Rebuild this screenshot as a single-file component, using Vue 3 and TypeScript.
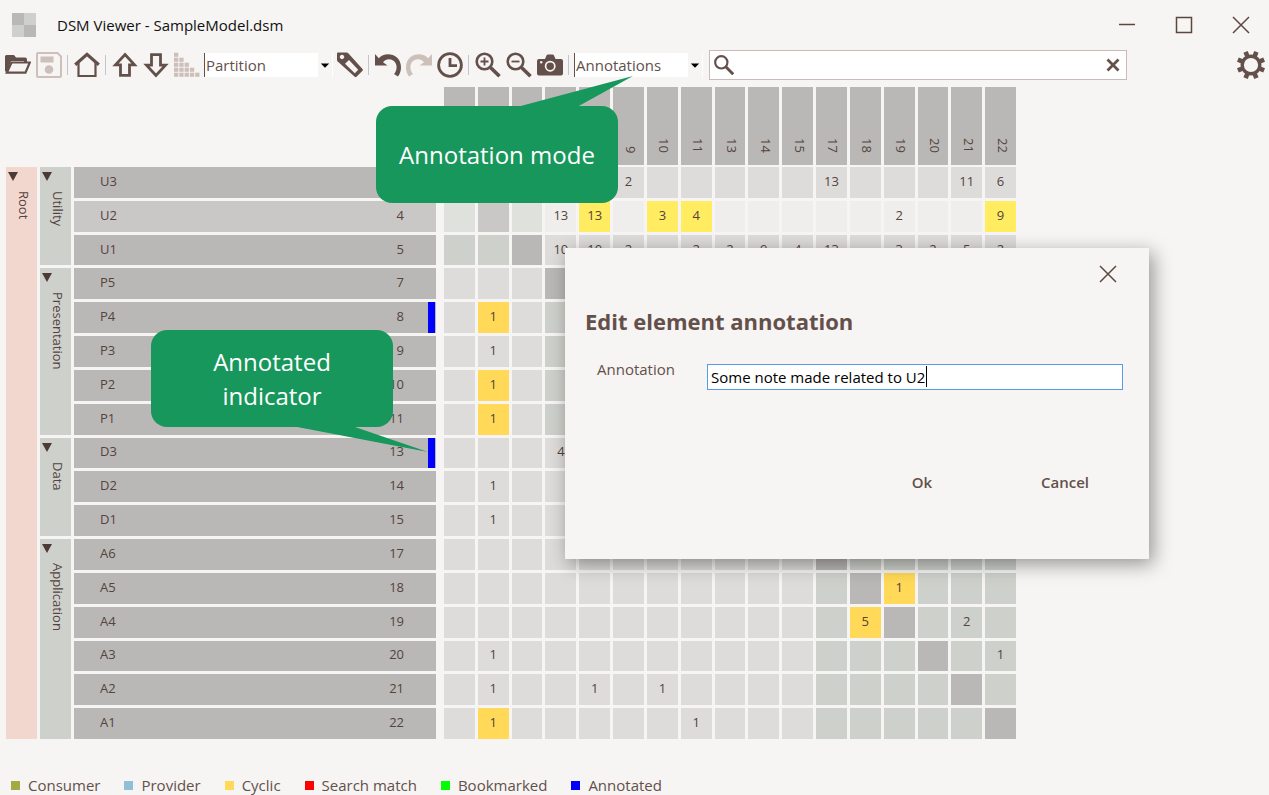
<script setup lang="ts">
import { ref } from 'vue'

interface Leaf { name: string; id: number; group: number; annotated?: boolean }
interface Group { name: string; start: number; span: number }
interface Cell { value: string; kind: string }

const groups: Group[] = [
  { name: 'Utility', start: 1, span: 3 },
  { name: 'Presentation', start: 4, span: 5 },
  { name: 'Data', start: 9, span: 3 },
  { name: 'Application', start: 12, span: 6 },
]

const leaves: Leaf[] = [
  { name: 'U3', id: 3, group: 0 },
  { name: 'U2', id: 4, group: 0 },
  { name: 'U1', id: 5, group: 0 },
  { name: 'P5', id: 7, group: 1 },
  { name: 'P4', id: 8, group: 1, annotated: true },
  { name: 'P3', id: 9, group: 1 },
  { name: 'P2', id: 10, group: 1 },
  { name: 'P1', id: 11, group: 1 },
  { name: 'D3', id: 13, group: 2, annotated: true },
  { name: 'D2', id: 14, group: 2 },
  { name: 'D1', id: 15, group: 2 },
  { name: 'A6', id: 17, group: 3 },
  { name: 'A5', id: 18, group: 3 },
  { name: 'A4', id: 19, group: 3 },
  { name: 'A3', id: 20, group: 3 },
  { name: 'A2', id: 21, group: 3 },
  { name: 'A1', id: 22, group: 3 },
]

// Dependency weights by provider row and consumer column; "c" marks a cycle.
const weights: Record<number, Record<number, string>> = {
  3: { 9: '2', 17: '13', 21: '11', 22: '6' },
  4: { 7: '13', 8: '13c', 10: '3c', 11: '4c', 19: '2', 22: '9c' },
  5: { 7: '10', 8: '10', 9: '2', 11: '2', 13: '2', 14: '9', 15: '4', 17: '13', 19: '3', 20: '2', 21: '5', 22: '2' },
  8: { 4: '1c' },
  9: { 4: '1' },
  10: { 4: '1c' },
  11: { 4: '1c' },
  13: { 7: '4' },
  14: { 4: '1' },
  15: { 4: '1' },
  18: { 19: '1c' },
  19: { 18: '5c', 21: '2' },
  20: { 4: '1', 22: '1' },
  21: { 4: '1', 8: '1', 10: '1' },
  22: { 4: '1c', 11: '1' },
}

const selectedId = ref(4)

function cell(row: Leaf, col: Leaf): Cell {
  const raw = weights[row.id]?.[col.id] ?? ''
  let kind = 'plain'
  if (row.id === col.id) kind = 'self'
  else if (raw.endsWith('c')) kind = 'cyclic'
  else if (row.group === col.group) kind = 'sibling'
  return { value: raw.replace('c', ''), kind }
}

const legend = [
  { label: 'Consumer', tone: 'consumer' },
  { label: 'Provider', tone: 'provider' },
  { label: 'Cyclic', tone: 'cyclic' },
  { label: 'Search match', tone: 'match' },
  { label: 'Bookmarked', tone: 'bookmarked' },
  { label: 'Annotated', tone: 'annotated' },
]

const stairs = [0, 1, 2, 3, 4].flatMap((r) =>
  Array.from({ length: r + 1 }, (_, c) => ({ x: c * 5 + c * 0.3, y: r * 5 + 0.7 })),
)
const teeth = [0, 1, 2, 3, 4, 5, 6, 7].map((n) => n * 45 + 22.5)

const sortMode = ref('Partition')
const indicator = ref('Annotations')
const query = ref('')
const note = ref('Some note made related to U2')
</script>

<template>
  <div class="window">
    <header class="titlebar">
      <svg class="logo" viewBox="0 0 24 24" aria-hidden="true">
        <path fill="#bab8b6" d="M0 0h12v12H0zM12 12h12v12H12z" />
        <path fill="#ced1cb" d="M12 0h12v12H12zM0 12h12v12H0z" />
      </svg>
      <h1>DSM Viewer - SampleModel.dsm</h1>
      <button class="win" aria-label="Minimize">
        <svg viewBox="0 0 18 18"><path d="M1 8.5h16" /></svg>
      </button>
      <button class="win" aria-label="Maximize">
        <svg viewBox="0 0 18 18"><path d="M1.500 1.500h15v15h-15z" /></svg>
      </button>
      <button class="win" aria-label="Close">
        <svg viewBox="0 0 18 18"><path d="M1 1l16 16M17 1L1 17" /></svg>
      </button>
    </header>

    <nav class="toolbar">
      <button class="tool" aria-label="Open">
        <svg viewBox="0 0 26 26">
          <path class="fill" d="M0 19.500V4.500Q0 3 1.500 3h7.500l2 2.500h9q2 0 2 2v3h-3v-1.500H6L2.500 19.500z" />
          <path class="line" fill="#f6f5f3" stroke-width="2.200" d="M6.500 10.500h18.300l-4.300 10.200H1.800z" />
        </svg>
      </button>
      <button class="tool off" aria-label="Save" disabled>
        <svg viewBox="0 0 26 26">
          <path class="line" stroke-width="2" d="M2 1h19.500L25 4.500V24q0 1-1 1H2q-1 0-1-1V2q0-1 1-1z" />
          <path class="fill" d="M4.500 4.500h13v6h-13z" />
          <circle class="fill" cx="13" cy="17.500" r="4.300" />
        </svg>
      </button>
      <span class="sep"></span>
      <button class="tool" aria-label="Home">
        <svg viewBox="0 0 26 26">
          <path class="line" stroke-width="2.200" d="M4.500 11v13h17V11" />
          <path class="line" stroke-width="3.200" d="M1.200 12.700L13 2.400l11.800 10.300" />
        </svg>
      </button>
      <span class="sep"></span>
      <button class="tool" aria-label="Move up">
        <svg viewBox="0 0 26 26"><path class="line" stroke-width="2.800" d="M13 2.500L22.500 12.800h-5v10.600h-9V12.800h-5z" /></svg>
      </button>
      <button class="tool" aria-label="Move down">
        <svg viewBox="0 0 26 26"><path class="line" stroke-width="2.800" d="M13 23.500L3.500 13.200h5V2.600h9v10.600h5z" /></svg>
      </button>
      <button class="tool off" aria-label="Sort" disabled>
        <svg viewBox="0 0 26 26">
          <rect v-for="(s, i) in stairs" :key="i" class="fill" :x="s.x" :y="s.y" width="4.300" height="4.100" />
        </svg>
      </button>
      <span class="combo">
        <select v-model="sortMode" aria-label="Sort algorithm"><option>Partition</option></select>
        <svg viewBox="0 0 15 24"><path d="M3 10.500h9L7.500 15z" /></svg>
      </span>
      <button class="tool tag" aria-label="Bookmark">
        <svg viewBox="0 0 26 26">
          <path class="fill" fill-rule="evenodd" d="M0 1.500Q0 .5 1 .5h8.500q1 0 1.800.8L25.500 17q.8 1 0 1.800l-6 6q-.9.800-1.800 0L1 9.800Q0 9 0 8zM5 2.800a2.200 2.200 0 1 0 .01 0zM12 8l-4 3.800 9.800 9.400 3.400-3.400z" />
        </svg>
      </button>
      <span class="sep"></span>
      <button class="tool" aria-label="Undo">
        <svg viewBox="0 0 26 26">
          <path class="fill" d="M0 2l3.800 4.200C10 -1 26 1.500 26 15.500c0 4-1.500 7-3 9l-4-2.500c1.500-1.500 2.600-4 2.600-7C21.600 7 12 4.500 8 10.300l4.500 3.200H0z" />
        </svg>
      </button>
      <button class="tool off" aria-label="Redo" disabled>
        <svg viewBox="0 0 26 26">
          <path class="fill" d="M26 2l-3.800 4.200C16 -1 0 1.500 0 15.500c0 4 1.500 7 3 9l4-2.500c-1.500-1.500-2.600-4-2.600-7C4.400 7 14 4.500 18 10.300l-4.500 3.200H26z" />
        </svg>
      </button>
      <button class="tool" aria-label="History">
        <svg viewBox="0 0 26 26">
          <circle class="line" cx="13" cy="13" r="11.400" stroke-width="2.800" />
          <path class="line" stroke-width="2.800" d="M13 6v7.600h7" />
        </svg>
      </button>
      <span class="sep"></span>
      <button class="tool" aria-label="Zoom in">
        <svg viewBox="0 0 26 26">
          <circle class="line" cx="9.500" cy="9.500" r="7.800" stroke-width="2.600" />
          <path class="line" stroke-width="3.600" d="M15.500 15.500l9 8.800" />
          <path class="line" stroke-width="1.800" d="M9.500 5.500v8M5.500 9.500h8" />
        </svg>
      </button>
      <button class="tool" aria-label="Zoom out">
        <svg viewBox="0 0 26 26">
          <circle class="line" cx="9.500" cy="9.500" r="7.800" stroke-width="2.600" />
          <path class="line" stroke-width="3.600" d="M15.500 15.500l9 8.800" />
          <path class="line" stroke-width="1.800" d="M5.500 9.500h8" />
        </svg>
      </button>
      <button class="tool" aria-label="Snapshot">
        <svg viewBox="0 0 26 26">
          <path class="fill" d="M2 7h6l1.500-3.500q.4-1 1.500-1h4.500q1 0 1.500 1L18.500 7H24q2 0 2 2v12.500q0 2-2 2H2q-2 0-2-2V9q0-2 2-2z" />
          <circle cx="13.200" cy="14.200" r="4.600" fill="none" stroke="#f6f5f3" stroke-width="1.700" />
          <circle cx="4.200" cy="10.200" r="1.200" fill="#f6f5f3" />
        </svg>
      </button>
      <span class="sep"></span>
      <span class="combo">
        <select v-model="indicator" aria-label="Indicator view"><option>Annotations</option></select>
        <svg viewBox="0 0 15 24"><path d="M3 10.500h9L7.500 15z" /></svg>
      </span>
      <div class="search">
        <svg viewBox="0 0 26 26">
          <circle class="line" cx="9.500" cy="9.500" r="8" stroke-width="2.800" />
          <path class="line" stroke-width="3.800" d="M15 15l10 10" />
        </svg>
        <input v-model="query" type="text" aria-label="Search" />
        <button aria-label="Clear search">
          <svg viewBox="0 0 14 14"><path class="line" stroke-width="2.800" d="M1.500 1.500l11 11M12.500 1.500l-11 11" /></svg>
        </button>
      </div>
      <button class="tool gear" aria-label="Settings">
        <svg viewBox="-15 -15 30 30">
          <rect v-for="t in teeth" :key="t" class="fill" x="-2.300" y="-14.200" width="4.600" height="6" :transform="`rotate(${t})`" />
          <circle class="line" r="8.800" stroke-width="3.400" />
        </svg>
      </button>
    </nav>

    <main class="workspace">
      <section class="tree" aria-label="Elements">
        <div class="node root">
          <button aria-label="Collapse Root"><svg viewBox="0 0 10 9"><path d="M0 0h10L5 9z" /></svg></button>
          <span>Root</span>
        </div>
        <div v-for="g in groups" :key="g.name" class="node group" :style="{ gridRow: `${g.start} / span ${g.span}` }">
          <button :aria-label="`Collapse ${g.name}`"><svg viewBox="0 0 10 9"><path d="M0 0h10L5 9z" /></svg></button>
          <span>{{ g.name }}</span>
        </div>
        <div v-for="l in leaves" :key="l.id" class="leaf" :class="{ selected: l.id === selectedId, noted: l.annotated }">
          <span>{{ l.name }}</span>
          <span>{{ l.id }}</span>
        </div>
      </section>

      <table class="matrix">
        <thead>
          <tr>
            <th v-for="c in leaves" :key="c.id" scope="col"><span>{{ c.id }}</span></th>
          </tr>
        </thead>
        <tbody>
          <tr v-for="r in leaves" :key="r.id" :class="{ selected: r.id === selectedId }">
            <td v-for="c in leaves" :key="c.id" :class="cell(r, c).kind">{{ cell(r, c).value }}</td>
          </tr>
        </tbody>
      </table>
    </main>

    <footer class="legend">
      <span v-for="item in legend" :key="item.label" class="key"><i :class="item.tone"></i>{{ item.label }}</span>
    </footer>

    <div class="dialog" role="dialog" aria-labelledby="dialog-title">
      <div class="dialog-bar">
        <button aria-label="Close dialog"><svg viewBox="0 0 18 18"><path d="M1 1l16 16M17 1L1 17" /></svg></button>
      </div>
      <h2 id="dialog-title">Edit element annotation</h2>
      <div class="field">
        <label for="note">Annotation</label>
        <div class="entry"><input id="note" v-model="note" type="text" /><i class="caret"></i></div>
      </div>
      <div class="actions">
        <button>Ok</button>
        <button>Cancel</button>
      </div>
    </div>

    <aside class="callout mode">
      <svg viewBox="0 0 242 127"><path d="M141 31L257 0L201 31z" /></svg>
      <p>Annotation mode</p>
    </aside>
    <aside class="callout mark">
      <svg viewBox="0 0 242 97"><path d="M141 96L277 122L201 96z" /></svg>
      <p>Annotated indicator</p>
    </aside>
  </div>
</template>

<style>
body {
  margin: 0;
  background: #f6f5f3;
}
</style>

<style scoped>
.window {
  position: relative;
  display: flex;
  flex-direction: column;
  min-height: 100vh;
  background: #f6f5f3;
  color: #64504a;
  font: 15px/20px "Segoe UI", "Open Sans", "Noto Sans", sans-serif;
}
button,
input,
select {
  margin: 0;
  padding: 0;
  border: 0;
  background: none;
  color: inherit;
  font: inherit;
}
svg {
  display: block;
}
.fill {
  fill: currentColor;
}
.line {
  fill: none;
  stroke: currentColor;
}
.line[fill] {
  fill: #f6f5f3;
}

.titlebar {
  display: flex;
  align-items: center;
  height: 50px;
  padding: 0 0 0 12px;
}
.logo {
  width: 24px;
  height: 24px;
}
.titlebar h1 {
  flex: 1;
  margin: 0 0 0 21px;
  color: #111;
  font-size: 15px;
  font-weight: 400;
}
.win {
  display: grid;
  place-items: center;
  width: 57px;
  height: 48px;
}
.win svg,
.dialog-bar svg {
  width: 18px;
  height: 18px;
  fill: none;
  stroke: #5c4740;
  stroke-width: 1.5;
}

.toolbar {
  display: flex;
  align-items: center;
  height: 30px;
  padding: 0 3px 0 2px;
}
.tool {
  display: grid;
  flex: none;
  place-items: center;
  width: 31px;
  height: 30px;
}
.tool svg {
  width: 26px;
  height: 26px;
}
.tool.off {
  color: #cdc0bb;
}
.tool.tag {
  margin-left: 1px;
}
.tool.gear svg {
  width: 30px;
  height: 30px;
}
.sep {
  flex: none;
  width: 1px;
  height: 20px;
  margin: 0 3px;
  background: #c3c5ca;
}
.combo {
  display: flex;
  flex: none;
  height: 24px;
  margin-left: 2px;
}
.combo select {
  width: 114px;
  border-left: 1px solid #64504a;
  background: #fff;
  appearance: none;
  padding-left: 1px;
  line-height: 24px;
}
.combo svg {
  width: 15px;
  height: 24px;
  border-right: 1px solid #fff;
  box-sizing: border-box;
  fill: #000;
}
.search {
  display: flex;
  flex: 1;
  align-items: center;
  box-sizing: border-box;
  height: 30px;
  margin: 0 108px 0 6px;
  padding: 0 6px 0 4px;
  border: 1px solid #c9bbb8;
  background: #fff;
}
.search > svg {
  width: 20px;
  height: 20px;
}
.search input {
  flex: 1;
  min-width: 0;
  padding: 0 8px;
  outline: 0;
}
.search button svg {
  width: 14px;
  height: 14px;
}

.workspace {
  display: flex;
  gap: 8px;
  align-items: flex-end;
  padding: 7px 6px 0;
  color: #54433e;
  font-size: 13px;
}
.tree {
  display: grid;
  grid-template-columns: 31px 31px 362px;
  grid-template-rows: repeat(17, 1fr);
  gap: 3px;
  height: 572px;
}
.node {
  display: flex;
  flex-direction: column;
  align-items: flex-start;
  padding: 5px 2px;
}
.node button {
  width: 10px;
  height: 9px;
}
.node svg {
  width: 10px;
  height: 9px;
  fill: #4c3a35;
}
.node span {
  margin: 10px 0 0 6px;
  writing-mode: vertical-rl;
}
.root {
  grid-column: 1;
  grid-row: 1 / span 17;
  background: #f2d7ce;
}
.group {
  grid-column: 2;
  background: #ced1cb;
}
.leaf {
  display: flex;
  grid-column: 3;
  align-items: center;
  justify-content: space-between;
  min-height: 0;
  padding: 0 32px 3px 26px;
  background: #bab8b6;
}
.leaf.selected {
  background: #cac8c6;
}
.leaf.noted {
  background: linear-gradient(#00f, #00f) right 1px top / 7px 100% no-repeat #bab8b6;
}

.matrix {
  display: flex;
  flex-direction: column;
  gap: 2px;
  width: 572px;
}
.matrix thead,
.matrix tbody {
  display: grid;
  grid-template-columns: repeat(17, 1fr);
  gap: 3px;
}
.matrix tr {
  display: contents;
}
.matrix tbody {
  grid-template-rows: repeat(17, 1fr);
  height: 572px;
}
.matrix th {
  display: flex;
  align-items: flex-end;
  justify-content: center;
  box-sizing: border-box;
  height: 78px;
  padding: 0 0 12px 4px;
  background: #bab8b6;
  font-weight: 400;
}
.matrix th span {
  writing-mode: vertical-rl;
}
.matrix td {
  display: flex;
  align-items: center;
  justify-content: center;
  min-width: 0;
  min-height: 0;
  padding: 0 0 3px;
  background: #dddcda;
}
.matrix .sibling {
  background: #ced1cb;
}
.matrix .self {
  background: #bab8b6;
}
.matrix .cyclic {
  background: #ffd957;
}
.matrix .selected .plain {
  background: #efeeec;
}
.matrix .selected .sibling {
  background: #dfe2dc;
}
.matrix .selected .self {
  background: #cac8c6;
}
.matrix .selected .cyclic {
  background: #ffec60;
}

.legend {
  display: flex;
  gap: 24px;
  margin-top: 36px;
  padding-left: 11px;
}
.key {
  display: flex;
  gap: 8px;
  align-items: center;
}
.key i {
  width: 9px;
  height: 9px;
}
.key .consumer { background: #a4aa43; }
.key .provider { background: #8fc0d8; }
.key .cyclic { background: #ffd957; }
.key .match { background: #f00; }
.key .bookmarked { background: #0f0; }
.key .annotated { background: #00f; }

.dialog {
  position: absolute;
  top: 248px;
  left: 565px;
  box-sizing: border-box;
  width: 584px;
  padding: 17px 26px 62px 20px;
  background: #f6f5f3;
  box-shadow: 4px 5px 18px rgba(0, 0, 0, 0.4);
}
.dialog-bar {
  display: flex;
  justify-content: flex-end;
  padding-right: 6px;
}
.dialog h2 {
  margin: 23px 0 0;
  font-size: 22px;
  font-weight: 700;
  line-height: 30px;
}
.field {
  display: flex;
  align-items: flex-start;
  justify-content: space-between;
  margin-top: 23px;
  padding-left: 12px;
}
.entry {
  position: relative;
  width: 416px;
  margin-top: 5px;
}
.entry input {
  box-sizing: border-box;
  width: 100%;
  height: 26px;
  padding: 0 3px;
  border: 1px solid #569de5;
  outline: 0;
  background: #fff;
  color: #000;
}
.caret {
  position: absolute;
  top: 2px;
  left: 219px;
  width: 1px;
  height: 21px;
  background: #000;
}
.actions {
  display: flex;
  gap: 27px;
  justify-content: flex-end;
  margin-top: 77px;
}
.actions button {
  width: 116px;
  height: 30px;
  font-weight: 600;
}

.callout {
  position: absolute;
  display: flex;
  align-items: center;
  justify-content: center;
  width: 242px;
  height: 97px;
  border-radius: 16px;
  background: #17975c;
  color: #fff;
  font-size: 24px;
  line-height: 34px;
  text-align: center;
}
.callout p {
  max-width: 210px;
  margin: 0;
}
.callout svg {
  position: absolute;
  bottom: 0;
  left: 0;
  width: 100%;
  overflow: visible;
  fill: #17975c;
}
.callout.mode {
  top: 106px;
  left: 376px;
}
.callout.mark {
  top: 330px;
  left: 151px;
}
.callout.mark p {
  max-width: 140px;
}
</style>
